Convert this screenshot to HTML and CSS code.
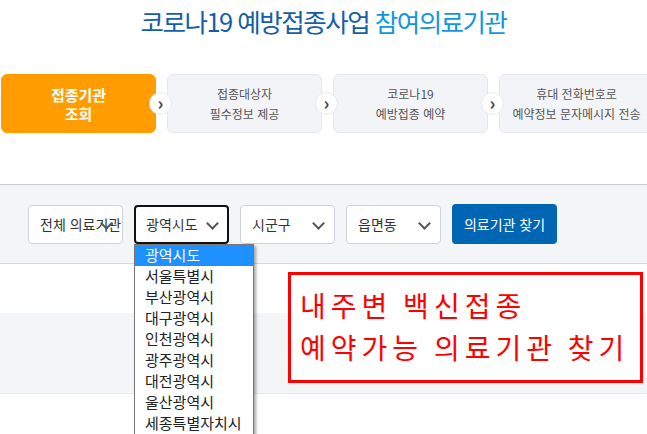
FILE: index.html
```html
<!DOCTYPE html>
<html lang="ko">
<head>
    <meta charset="UTF-8">
    <meta name="viewport" content="width=device-width, initial-scale=1.0">
    <title>코로나19 예방접종사업 참여의료기관</title>
    <link rel="stylesheet" href="styles.css">
</head>
<body>
    <h1 class="title"><span class="dark">코로나19 예방접종사업</span> <span class="light">참여의료기관</span></h1>

    <div class="steps">
        <div class="step active">접종기관<br>조회</div>
        <div class="step">접종대상자<br>필수정보 제공</div>
        <div class="step">코로나19<br>예방접종 예약</div>
        <div class="step">휴대 전화번호로<br>예약정보 문자메시지 전송</div>
        <span class="arrow a1">&#8250;</span>
        <span class="arrow a2">&#8250;</span>
        <span class="arrow a3">&#8250;</span>
    </div>

    <div class="filter">
        <div class="select"><span>전체 의료기관</span><i class="chev"></i></div>
        <div class="select focus"><span>광역시도</span><i class="chev"></i>
            <ul class="options">
                <li class="on">광역시도</li>
                <li>서울특별시</li>
                <li>부산광역시</li>
                <li>대구광역시</li>
                <li>인천광역시</li>
                <li>광주광역시</li>
                <li>대전광역시</li>
                <li>울산광역시</li>
                <li>세종특별자치시</li>
            </ul>
        </div>
        <div class="select"><span>시군구</span><i class="chev"></i></div>
        <div class="select"><span>읍면동</span><i class="chev"></i></div>
        <button class="search">의료기관 찾기</button>
    </div>

    <div class="spacer"></div>
    <div class="band"></div>

    <div class="callout">내주변 백신접종<br>예약가능 의료기관 찾기</div>
</body>
</html>
```

FILE: styles.css
```css
* { margin: 0; padding: 0; box-sizing: border-box; }
html, body { width: 647px; height: 434px; overflow: hidden; }
body {
    position: relative;
    font-family: "Noto Sans CJK KR", "Noto Sans", sans-serif;
    background: #fff;
    color: #333;
}
.title {
    height: 44px;
    padding-top: 5px;
    text-align: center;
    font-size: 25.5px;
    font-weight: 400;
    letter-spacing: -1.5px;
    line-height: 32px;
}
.title .dark { color: #155ea8; }
.title .light { color: #1296e4; }

.steps {
    position: relative;
    display: flex;
    gap: 11px;
    margin-top: 30px;
    padding-left: 1px;
    width: 647px;
    overflow: hidden;
}
.step {
    flex: 0 0 155px;
    height: 59px;
    display: flex;
    align-items: center;
    justify-content: center;
    text-align: center;
    font-size: 12px;
    line-height: 20px;
    color: #555;
    background: #f3f4f7;
    border: 1px solid #e4e7ee;
    border-radius: 6px;
}
.step.active {
    background: #ff9d00;
    border-color: #ff9d00;
    color: #fff;
    font-size: 15px;
    font-weight: 700;
    line-height: 19px;
}
.arrow {
    position: absolute;
    top: 18px;
    width: 23px;
    height: 23px;
    border-radius: 50%;
    background: #fff;
    border: 1px solid #e6e8ee;
    color: #444;
    font-size: 18px;
    font-weight: 700;
    line-height: 19px;
    text-align: center;
}
.a1 { left: 149px; }
.a2 { left: 315px; }
.a3 { left: 481px; }

.filter {
    margin-top: 51px;
    height: 80px;
    display: flex;
    align-items: center;
    gap: 11px;
    padding-left: 28px;
    background: #f4f5f7;
    border-top: 1px solid #c9cbd0;
    border-bottom: 1px solid #d6d8dd;
}
.select {
    position: relative;
    width: 95px;
    height: 39px;
    display: flex;
    align-items: center;
    padding-left: 11px;
    background: #fff;
    border: 1px solid #cfd2d8;
    border-radius: 4px;
    font-size: 14px;
    color: #333;
    white-space: nowrap;
}
.select span {
    display: block;
    width: 82px;
    overflow: hidden;
}
.select.focus {
    border: 2px solid #111;
    padding-left: 10px;
}
.chev {
    position: absolute;
    right: 11px;
    top: 13px;
    width: 9px;
    height: 9px;
    border-right: 2px solid #555;
    border-bottom: 2px solid #555;
    transform: rotate(45deg);
}
.focus .chev { right: 10px; top: 12px; }
.search {
    width: 105px;
    height: 40px;
    background: #0066b4;
    color: #fff;
    border: none;
    border-radius: 4px;
    font-family: inherit;
    font-size: 14px;
}

.spacer { height: 49px; }
.band {
    height: 81px;
    background: #f4f5f7;
    border-bottom: 1px solid #e6e8ec;
}

.options {
    position: absolute;
    top: 37px;
    left: -2px;
    width: 120px;
    list-style: none;
    background: #fff;
    border: 1px solid #777;
    box-shadow: 2px 2px 3px rgba(0, 0, 0, 0.35);
    font-size: 15px;
    color: #222;
    z-index: 2;
}
.options li {
    height: 21px;
    line-height: 20px;
    padding-left: 10px;
}
.options li.on { background: #1e90ff; color: #fff; }

.callout {
    position: absolute;
    left: 288px;
    top: 272px;
    width: 355px;
    height: 111px;
    padding: 9px 0 0 9px;
    border: 3px solid #ff0000;
    background: #fff;
    color: #ff0000;
    font-size: 28px;
    line-height: 42px;
    letter-spacing: 5px;
    word-spacing: -2px;
    white-space: nowrap;
}
```
